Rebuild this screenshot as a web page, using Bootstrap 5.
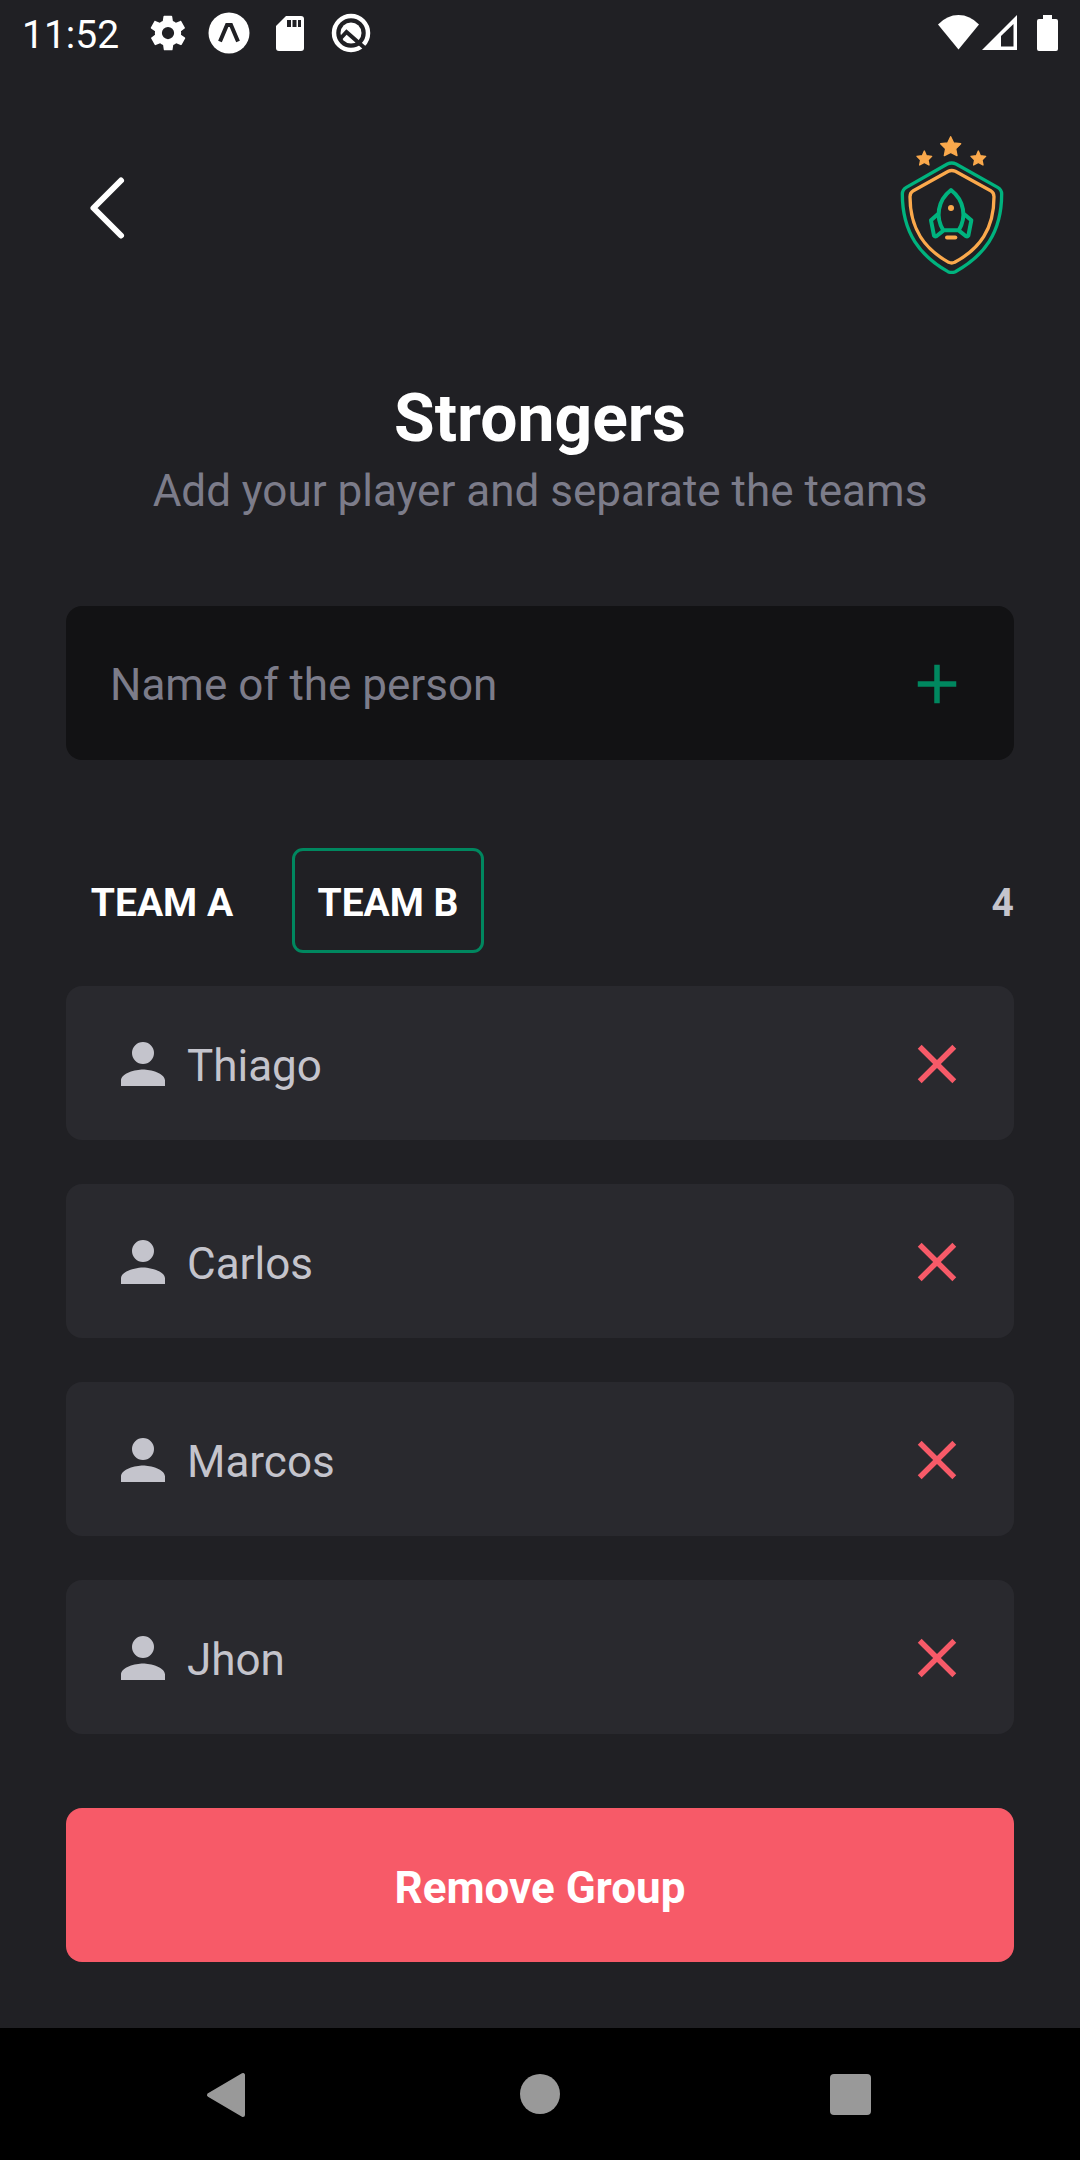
<!DOCTYPE html>
<html lang="en">
<head>
<meta charset="utf-8">
<meta name="viewport" content="width=device-width, initial-scale=1">
<title>Strongers</title>
<link href="https://cdn.jsdelivr.net/npm/bootstrap@5.3.0/dist/css/bootstrap.min.css" rel="stylesheet">
<style>
  :root {
    --bg: #202024; --field: #121214; --surface: #29292e;
    --green: #00875f; --red: #f75a68; --muted: #7c7c8a; --soft: #c4c4cc;
    --side: 66px; --row: 154px; --round: 16px;
  }
  body { background: var(--bg); color: #fff; font-family: Roboto, "Liberation Sans", sans-serif; font-size: 44px; line-height: 52px; }
  svg { display: block; flex: none; }
  .btn { --bs-btn-color: #fff; --bs-btn-hover-color: #fff; --bs-btn-active-color: #fff; line-height: inherit; }
  .status-bar { height: 66px; padding: 0 22px 0 22px; font-size: 39px; }
  .status-bar time { padding-top: 3px; }
  .status-icons { gap: 19px; margin-left: 28px; }
  .page-main { padding: 0 var(--side) var(--side); }
  .top-bar { height: 146px; margin-top: 69px; padding: 0 10px 0 22px; }
  .page-title { font-size: 66px; line-height: 78px; margin: 99px 0 7px; font-weight: 700; }
  .page-subtitle { color: var(--muted); margin-bottom: 89px; }
  .name-field { height: var(--row); background: var(--field); border-radius: var(--round); }
  .name-field .form-control { background: transparent; border: 0; color: #fff; font-size: 44px; line-height: 52px; padding: 4px 44px 0; }
  .name-field .form-control::placeholder { color: var(--muted); }
  .icon-btn { flex: none; width: var(--row); display: grid; place-items: center; }
  .name-field .icon-btn { padding: 2px 0 0; }
  .team-bar { margin: 88px 0 33px; font-size: 39px; }
  .team-tabs { gap: 34px; }
  .team-tabs .btn { width: 192px; height: 105px; padding: 5px 0 0; border: 3px solid transparent; border-radius: 11px; font-size: 39px; font-weight: 700; }
  .team-tabs .btn.active { border-color: var(--green); background: transparent; }
  .player-count { color: var(--soft); padding-top: 5px; }
  .player-list { gap: 44px; }
  .player { height: var(--row); background: var(--surface); border-radius: var(--round); color: var(--soft); padding: 2px 0 0 44px; }
  .player-name { margin-left: 11px; padding-top: 4px; }
  .remove-btn { min-height: var(--row); margin-top: 74px; padding: 6px 0 0; border: 0; border-radius: var(--round); font-size: 44px; font-weight: 700;
    --bs-btn-bg: var(--red); --bs-btn-hover-bg: #e84c5b; --bs-btn-active-bg: #d94351; }
  .system-nav { height: 132px; background: #000; padding: 0 179px; }
</style>
</head>
<body>
<div class="d-flex flex-column min-vh-100">
  <header class="status-bar d-flex align-items-center">
    <time>11:52</time>
    <div class="status-icons d-flex align-items-center">
      <svg width="42" height="42" viewBox="0 0 24 24" fill="#fff" aria-hidden="true"><path d="M19.400 13c0-.3.1-.6.1-1s0-.7-.1-1l2.100-1.600c.2-.2.300-.4.100-.6l-2-3.500c-.1-.2-.4-.3-.6-.2l-2.500 1c-.5-.4-1.100-.7-1.700-1l-.4-2.600c0-.2-.2-.4-.5-.4h-4c-.2 0-.5.2-.5.4l-.4 2.600c-.6.300-1.200.6-1.700 1l-2.500-1c-.2-.1-.5 0-.6.2l-2 3.500c-.1.200-.1.500.1.600L4.600 11c0 .3-.1.700-.1 1s0 .7.100 1l-2.100 1.600c-.2.200-.3.400-.1.600l2 3.500c.1.200.4.300.6.200l2.500-1c.5.400 1.100.7 1.700 1l.4 2.600c0 .2.200.4.500.4h4c.2 0 .5-.2.500-.4l.4-2.600c.6-.3 1.200-.6 1.700-1l2.500 1c.2.100.5 0 .6-.2l2-3.500c.1-.2.100-.5-.1-.6L19.400 13zM12 15.500a3.500 3.500 0 1 1 0-7 3.500 3.500 0 0 1 0 7z"/></svg>
      <svg width="42" height="42" viewBox="0 0 42 42" aria-hidden="true"><circle cx="21" cy="21" r="20.500" fill="#fff"/><path d="M12 29.500L19 13h4l7 16.500" fill="none" stroke="#202024" stroke-width="4"/></svg>
      <svg width="42" height="42" viewBox="0 0 42 42" aria-hidden="true"><path d="M17 4h15a3 3 0 0 1 3 3v29a3 3 0 0 1-3 3H10a3 3 0 0 1-3-3V14z" fill="#fff"/><path d="M18 8h4v7h-4zM23.500 8h4v7h-4zM29 8h3v7h-3z" fill="#202024"/></svg>
      <svg width="42" height="42" viewBox="0 0 42 42" fill="none" aria-hidden="true"><circle cx="21" cy="21" r="17" stroke="#fff" stroke-width="4.500"/><circle cx="21" cy="21" r="10.500" fill="#fff"/><path d="M10 27l6.500-7L37 38" stroke="#202024" stroke-width="4"/></svg>
    </div>
    <div class="d-flex align-items-center ms-auto">
      <svg width="120" height="42" viewBox="0 0 120 42" aria-hidden="true"><path d="M0 12.500Q9 3 20.500 3T41 12.500L20.500 37.500z" fill="#fff"/><path d="M79 3v35H44z" fill="#fff"/><path d="M63 24L75.500 12V34.500H63z" fill="#202024"/><path d="M105 3h9v4h4q2 0 2 2v28q0 2-2 2h-17q-2 0-2-2V9q0-2 2-2h4z" fill="#fff"/></svg>
    </div>
  </header>

  <main class="page-main flex-grow-1 d-flex flex-column">
    <div class="top-bar d-flex justify-content-between align-items-start">
      <button type="button" class="btn border-0 p-0 align-self-center" aria-label="Back">
        <svg width="40" height="66" viewBox="0 0 40 66" fill="none" stroke="#fff" stroke-width="6" stroke-linecap="round" stroke-linejoin="round"><path d="M33 5.500L5.500 33L33 60.500"/></svg>
      </button>
      <svg width="104" height="139" viewBox="60 45 312 417" fill="none" stroke-linecap="round" stroke-linejoin="round" role="img" aria-label="Rocket shield crest">
        <path d="M202 132Q215 126 228 132L353 202Q365 209 365 222C365 339 311 408 226 455Q215 460 204 455C121 408 67 339 67 222Q67 209 79 202Z" stroke="#00b37e" stroke-width="10"/>
        <path d="M205 154Q215 149 226 154L332 212Q342 218 342 230C342 326 300 386 224 427Q215 431 206 427C132 386 90 326 90 230Q90 218 100 212Z" stroke="#fba94c" stroke-width="10"/>
        <g fill="#fba94c" stroke="#fba94c" stroke-width="4">
          <path d="M212 50l9 19 21 2-15 15 4 21-19-10-19 10 4-21-15-15 21-2z"/>
          <path d="M133 93l6 14 16 2-11 11 3 15-14-8-14 8 3-15-11-11 16-2z"/>
          <path d="M295 93l6 14 16 2-11 11 3 15-14-8-14 8 3-15-11-11 16-2z"/>
          <circle cx="213" cy="264" r="7"/>
        </g>
        <path d="M201 352.500h25" stroke="#fba94c" stroke-width="12"/>
        <path d="M213 210C172 242 166 292 190 331H236C260 292 254 242 213 210ZM175 281L153 301 162 347Q165 351 170 348L190 332M251 281L274 301 265 347Q262 351 257 348L237 332" stroke="#00b37e" stroke-width="12"/>
      </svg>
    </div>

    <h1 class="page-title text-center">Strongers</h1>
    <p class="page-subtitle text-center">Add your player and separate the teams</p>

    <form class="name-field d-flex" onsubmit="return false">
      <input id="player" type="text" class="form-control flex-grow-1" placeholder="Name of the person" aria-label="Name of the person" autocomplete="off">
      <button type="submit" class="btn icon-btn border-0" aria-label="Add player">
        <svg width="66" height="66" viewBox="0 0 24 24" fill="#00875f"><path d="M19 13h-6v6h-2v-6H5v-2h6V5h2v6h6z"/></svg>
      </button>
    </form>

    <div class="team-bar d-flex align-items-center justify-content-between">
      <div class="team-tabs d-flex" role="group" aria-label="Teams">
        <button type="button" class="btn">TEAM A</button>
        <button type="button" class="btn active" aria-pressed="true">TEAM B</button>
      </div>
      <span class="player-count fw-bold">4</span>
    </div>

    <svg width="0" height="0" class="position-absolute" aria-hidden="true">
      <symbol id="person" viewBox="0 0 24 24"><path d="M12 12a4 4 0 1 0 0-8 4 4 0 0 0 0 8zm0 2c-2.670 0-8 1.340-8 4v2h16v-2c0-2.660-5.330-4-8-4z"/></symbol>
      <symbol id="cross" viewBox="0 0 24 24"><path d="M19 6.410L17.590 5 12 10.590 6.410 5 5 6.410 10.590 12 5 17.590 6.410 19 12 13.410 17.590 19 19 17.590 13.410 12z"/></symbol>
    </svg>
    <ul class="player-list list-unstyled d-flex flex-column mb-0">
      <li class="player d-flex align-items-center">
        <svg width="66" height="66" fill="#c4c4cc" aria-hidden="true"><use href="#person"/></svg>
        <span class="player-name flex-grow-1">Thiago</span>
        <button type="button" class="btn icon-btn border-0 p-0" aria-label="Remove Thiago"><svg width="66" height="66" fill="#f75a68"><use href="#cross"/></svg></button>
      </li>
      <li class="player d-flex align-items-center">
        <svg width="66" height="66" fill="#c4c4cc" aria-hidden="true"><use href="#person"/></svg>
        <span class="player-name flex-grow-1">Carlos</span>
        <button type="button" class="btn icon-btn border-0 p-0" aria-label="Remove Carlos"><svg width="66" height="66" fill="#f75a68"><use href="#cross"/></svg></button>
      </li>
      <li class="player d-flex align-items-center">
        <svg width="66" height="66" fill="#c4c4cc" aria-hidden="true"><use href="#person"/></svg>
        <span class="player-name flex-grow-1">Marcos</span>
        <button type="button" class="btn icon-btn border-0 p-0" aria-label="Remove Marcos"><svg width="66" height="66" fill="#f75a68"><use href="#cross"/></svg></button>
      </li>
      <li class="player d-flex align-items-center">
        <svg width="66" height="66" fill="#c4c4cc" aria-hidden="true"><use href="#person"/></svg>
        <span class="player-name flex-grow-1">Jhon</span>
        <button type="button" class="btn icon-btn border-0 p-0" aria-label="Remove Jhon"><svg width="66" height="66" fill="#f75a68"><use href="#cross"/></svg></button>
      </li>
    </ul>

    <button type="button" class="btn remove-btn w-100">Remove Group</button>
  </main>

  <nav class="system-nav d-flex align-items-center justify-content-between" aria-label="System navigation">
    <button type="button" class="btn border-0 p-0" aria-label="Back"><svg width="98" height="66" viewBox="0 0 98 66"><path d="M30 34L64 14v40z" fill="#999" stroke="#999" stroke-width="4" stroke-linejoin="round"/></svg></button>
    <button type="button" class="btn border-0 p-0" aria-label="Home"><svg width="98" height="66" viewBox="0 0 98 66"><circle cx="49" cy="33" r="20" fill="#999"/></svg></button>
    <button type="button" class="btn border-0 p-0" aria-label="Recents"><svg width="98" height="66" viewBox="0 0 98 66"><rect x="27" y="13" width="41" height="41" rx="4" fill="#999"/></svg></button>
  </nav>
</div>
<script src="https://cdn.jsdelivr.net/npm/bootstrap@5.3.0/dist/js/bootstrap.bundle.min.js"></script>
</body>
</html>
